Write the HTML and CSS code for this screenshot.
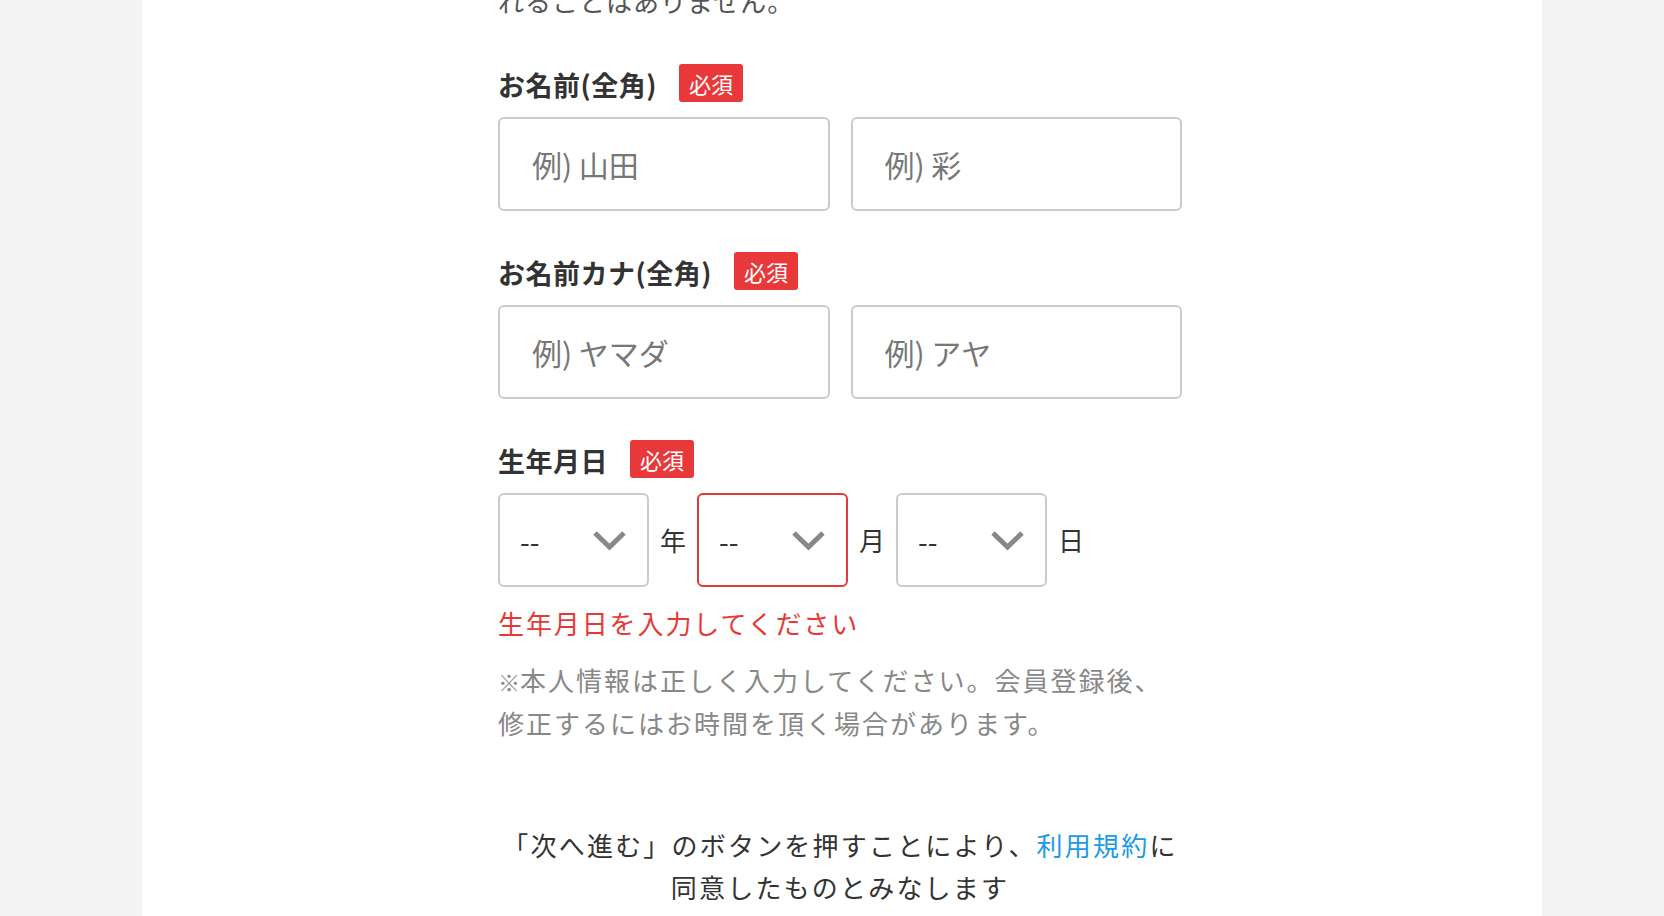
FILE: index.html
```html
<!DOCTYPE html>
<html lang="ja">
<head>
<meta charset="utf-8">
<title>会員登録</title>
<link rel="stylesheet" href="styles.css">
</head>
<body>
<div class="page">
  <div class="content">
    <p class="intro">れることはありません。</p>

    <div class="field">
      <div class="label-row">
        <span class="label">お名前(全角)</span>
        <span class="badge">必須</span>
      </div>
      <div class="pair">
        <input class="input" type="text" placeholder="例) 山田">
        <input class="input" type="text" placeholder="例) 彩">
      </div>
    </div>

    <div class="field">
      <div class="label-row">
        <span class="label">お名前カナ(全角)</span>
        <span class="badge">必須</span>
      </div>
      <div class="pair">
        <input class="input" type="text" placeholder="例) ヤマダ">
        <input class="input" type="text" placeholder="例) アヤ">
      </div>
    </div>

    <div class="field">
      <div class="label-row">
        <span class="label">生年月日</span>
        <span class="badge">必須</span>
      </div>
      <div class="date-row">
        <div class="select">
          <span class="select-value">--</span>
          <svg class="chev" width="33" height="20" viewBox="0 0 33 20"><polyline points="2,2 16.5,16 31,2" fill="none" stroke="#888" stroke-width="5"/></svg>
        </div>
        <span class="unit">年</span>
        <div class="select select-error">
          <span class="select-value">--</span>
          <svg class="chev" width="33" height="20" viewBox="0 0 33 20"><polyline points="2,2 16.5,16 31,2" fill="none" stroke="#888" stroke-width="5"/></svg>
        </div>
        <span class="unit">月</span>
        <div class="select">
          <span class="select-value">--</span>
          <svg class="chev" width="33" height="20" viewBox="0 0 33 20"><polyline points="2,2 16.5,16 31,2" fill="none" stroke="#888" stroke-width="5"/></svg>
        </div>
        <span class="unit">日</span>
      </div>
      <p class="error">生年月日を入力してください</p>
    </div>

    <p class="note"><span class="kome">※</span>本人情報は正しく入力してください。会員登録後、<br>修正するにはお時間を頂く場合があります。</p>

    <p class="agree">「次へ進む」のボタンを押すことにより、<a class="link" href="#">利用規約</a>に<br>同意したものとみなします</p>
  </div>
</div>
</body>
</html>
```
FILE: styles.css
```css
html, body {
  margin: 0;
  padding: 0;
  background: #f3f3f3;
  height: 100%;
  overflow: hidden;
}

body {
  font-family: "Noto Sans CJK JP", "Noto Sans", sans-serif;
  color: #333;
}

.page {
  width: 1400px;
  margin-left: 142px;
  min-height: 916px;
  background: #fff;
  display: flex;
  flex-direction: column;
}

.content {
  width: 684px;
  margin-left: 356px;
  margin-top: -21px;
  display: flex;
  flex-direction: column;
}

.intro {
  margin: 0;
  font-size: 26px;
  line-height: 43px;
  letter-spacing: 1px;
  color: #555;
}

.field {
  margin-top: 42px;
  display: flex;
  flex-direction: column;
}

.field + .field {
  margin-top: 41px;
}

.label-row {
  display: flex;
  align-items: center;
  gap: 22px;
  height: 38px;
}

.label {
  font-size: 27px;
  font-weight: 700;
  letter-spacing: 0.5px;
  line-height: 38px;
  padding-top: 3px;
  color: #333;
}

.badge {
  height: 38px;
  padding: 0 10px;
  background: #e9383a;
  color: #fff;
  border-radius: 3px;
  font-size: 22px;
  line-height: 38px;
  letter-spacing: 0;
}

.pair {
  margin-top: 15px;
  display: grid;
  grid-template-columns: 1fr 1fr;
  gap: 21px;
}

.input {
  box-sizing: border-box;
  height: 94px;
  width: 100%;
  margin: 0;
  padding: 0 0 0 32px;
  border: 2px solid #cbcbcb;
  border-radius: 6px;
  background: #fff;
  font-family: "Noto Sans CJK JP", sans-serif;
  font-size: 30px;
  color: #333;
  outline: none;
}

.input::placeholder {
  color: #777;
}

.date-row {
  margin-top: 15px;
  display: flex;
  align-items: center;
  gap: 11px;
}

.select {
  box-sizing: border-box;
  flex: 0 0 151px;
  width: 151px;
  height: 94px;
  border: 2px solid #cbcbcb;
  border-radius: 6px;
  display: flex;
  align-items: center;
  justify-content: space-between;
  padding: 0 21px 0 20px;
  background: #fff;
}

.select-error {
  border-color: #e53935;
}

.select-value {
  font-size: 28px;
  color: #333;
  line-height: 1;
  padding-top: 1px;
}

.chev {
  display: block;
  margin-top: 2px;
}

.unit {
  font-size: 26px;
  color: #333;
  line-height: 1;
}

.error {
  margin: 16px 0 0;
  font-size: 26px;
  line-height: 40px;
  letter-spacing: 1.9px;
  color: #e53935;
}

.note {
  margin: 16px 0 0;
  font-size: 26px;
  line-height: 41px;
  letter-spacing: 2px;
  color: #888;
}

.kome {
  font-size: 22px;
  font-weight: 700;
  letter-spacing: 0;
  color: #888;
}

.agree {
  margin: 81px 0 0;
  text-align: center;
  font-size: 26px;
  line-height: 42px;
  letter-spacing: 2.2px;
  color: #333;
}

.link {
  color: #1a9be3;
  text-decoration: none;
}
```
